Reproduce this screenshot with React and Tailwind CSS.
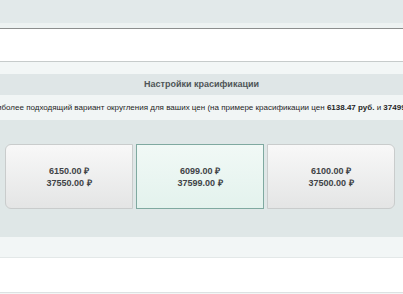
import React, { useState } from 'react';

const OPTIONS = [
  { id: 'up50', a: '6150.00 ₽', b: '37550.00 ₽' },
  { id: 'nine', a: '6099.00 ₽', b: '37599.00 ₽' },
  { id: 'round100', a: '6100.00 ₽', b: '37500.00 ₽' },
];

export default function App() {
  const [selected, setSelected] = useState('nine');

  return (
    <div className="w-[403px] h-[294px] overflow-hidden bg-white font-['Liberation_Sans',Arial,sans-serif]">
      <div className="h-[23px] bg-[#e2e9ea]" />
      <div className="h-[5px] bg-[#edf2f2]" />
      <div className="h-px bg-[#8c8e8e]" />
      <div className="h-[32px] bg-white" />
      <div className="h-px bg-[#c6cbcb]" />
      <div className="h-[12px] bg-[#f2f6f6]" />

      <div className="h-[21px] bg-[#dfe6e7] flex items-center justify-center">
        <span className="text-[9px] font-bold text-[#4f5558]">Настройки красификации</span>
      </div>

      <div className="h-[25px] bg-[#f1f5f5] flex items-center justify-center overflow-hidden pr-[16px]">
        <p className="whitespace-nowrap shrink-0 text-[8px] text-[#1f1f1f]">
          Выберите наиболее подходящий вариант округления для ваших цен (на примере красификации цен{' '}
          <b>6138.47 руб.</b> и <b>37499.00 руб.</b>)
        </p>
      </div>

      <div className="bg-[#dfe7e7] pt-[24px] pb-[28px] pl-[5px]">
        <div className="flex gap-[3px]">
          {OPTIONS.map((o, i) => {
            const active = o.id === selected;
            return (
              <button
                key={o.id}
                onClick={() => setSelected(o.id)}
                className={`w-[128px] h-[65px] flex flex-col items-center justify-center border text-[9px] font-bold leading-[12px] text-[#3f4346] ${
                  active
                    ? 'border-[#7fa9a0] bg-gradient-to-b from-[#f1f9f6] to-[#e3f2ed]'
                    : 'border-[#c9cccc] bg-gradient-to-b from-[#f8f8f8] to-[#e4e5e5]'
                } ${i === 0 ? 'rounded-l-[6px]' : ''} ${i === OPTIONS.length - 1 ? 'rounded-r-[6px]' : ''}`}
              >
                <span>{o.a}</span>
                <span>{o.b}</span>
              </button>
            );
          })}
        </div>
      </div>

      <div className="h-[20px] bg-[#f2f6f6]" />
      <div className="h-px bg-[#e3e8e8]" />
      <div className="h-[34px] bg-white" />
      <div className="h-px bg-[#dde2e2]" />
      <div className="h-[10px] bg-[#f2f6f6]" />
    </div>
  );
}
